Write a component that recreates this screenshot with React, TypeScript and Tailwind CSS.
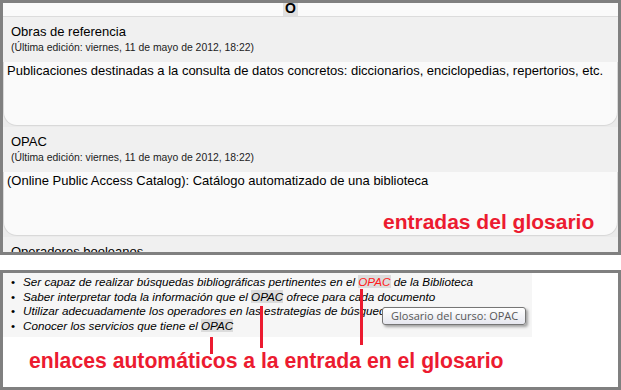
import React from "react";

const Entry = ({ title, body }: { title: string; body: string }) => {
  return (
    <div className="shrink-0 pb-px">
      <div className="h-[45px] bg-[#f0f0f0] pl-[8px] pt-[7px]">
        <div className="text-[13px] leading-[16px] text-black">{title}</div>
        <div className="mt-[2px] text-[10.4px] leading-[12px] text-[#222]">
          (Última edición: viernes, 11 de mayo de 2012, 18:22)
        </div>
      </div>
      <div className="h-[64px] rounded-b-[14px] border border-t-0 border-[#d9d9d9] bg-[#fafafa] pl-[3px] pt-px">
        <p className="text-[13px] leading-[15px] text-black">{body}</p>
      </div>
    </div>
  );
};

const Opac = ({ active = false }: { active?: boolean }) => (
  <span className={`bg-[#dcdcdc] ${active ? "text-[#ff1a1a]" : "text-black"}`}>OPAC</span>
);

export default function App() {
  return (
    <div className="relative h-[390px] w-[621px] overflow-hidden bg-white font-['Liberation_Sans',Arial,sans-serif]">
      {/* glosario */}
      <div className="flex h-[255px] flex-col overflow-hidden border-[3px] border-[#808080] bg-[#ebebeb]">
        <div className="relative h-[14px] shrink-0 overflow-hidden border-b border-[#dcdcdc] bg-[#fafafa]">
          <span className="absolute left-[280px] top-[-3px] bg-[#e0e0e0] px-[2px] text-[14px] font-bold leading-[16px] text-black">
            O
          </span>
        </div>
        <Entry
          title="Obras de referencia"
          body="Publicaciones destinadas a la consulta de datos concretos: diccionarios, enciclopedias, repertorios, etc."
        />
        <Entry
          title="OPAC"
          body="(Online Public Access Catalog): Catálogo automatizado de una biblioteca"
        />
        <Entry title="Operadores booleanos" body="" />
      </div>

      {/* curso */}
      <div className="mt-[15px] h-[120px] border-[3px] border-[#808080] bg-white">
        <ul className="h-[64px] w-[529px] bg-[#f6f6f6] pl-[8px] pt-[2px] text-[11.7px] italic leading-[14.6px] text-black">
          <li className="flex">
            <span className="w-[12px] not-italic">•</span>
            <span>
              Ser capaz de realizar búsquedas bibliográficas pertinentes en el <Opac active /> de la Biblioteca
            </span>
          </li>
          <li className="flex">
            <span className="w-[12px] not-italic">•</span>
            <span>
              Saber interpretar toda la información que el <Opac /> ofrece para cada documento
            </span>
          </li>
          <li className="flex">
            <span className="w-[12px] not-italic">•</span>
            <span>Utilizar adecuadamente los operadores en las estrategias de búsqueda</span>
          </li>
          <li className="flex">
            <span className="w-[12px] not-italic">•</span>
            <span>
              Conocer los servicios que tiene el <Opac />
            </span>
          </li>
        </ul>
      </div>

      {/* anotaciones */}
      <div className="absolute left-[383px] top-[209px] text-[21px] font-bold leading-[25px] text-[#ec1b30]">
        entradas del glosario
      </div>
      <div className="absolute left-[210px] top-[337px] h-[17px] w-[3px] bg-[#ec1b30]" />
      <div className="absolute left-[260px] top-[306px] h-[42px] w-[3px] bg-[#ec1b30]" />
      <div className="absolute left-[360px] top-[289px] h-[56px] w-[3px] bg-[#ec1b30]" />
      <div className="absolute left-[29px] top-[348px] text-[21.2px] font-bold leading-[25px] text-[#ec1b30]">
        enlaces automáticos a la entrada en el glosario
      </div>

      <div className="absolute left-[382px] top-[307px] flex h-[18px] w-[144px] items-center rounded-[3px] border border-[#767676] bg-gradient-to-b from-white to-[#e6e7ef] pl-[8px] font-['Open_Sans',sans-serif] text-[11px] text-[#575757] shadow-[2px_2px_3px_rgba(0,0,0,0.35)]">
        Glosario del curso: OPAC
      </div>
    </div>
  );
}
